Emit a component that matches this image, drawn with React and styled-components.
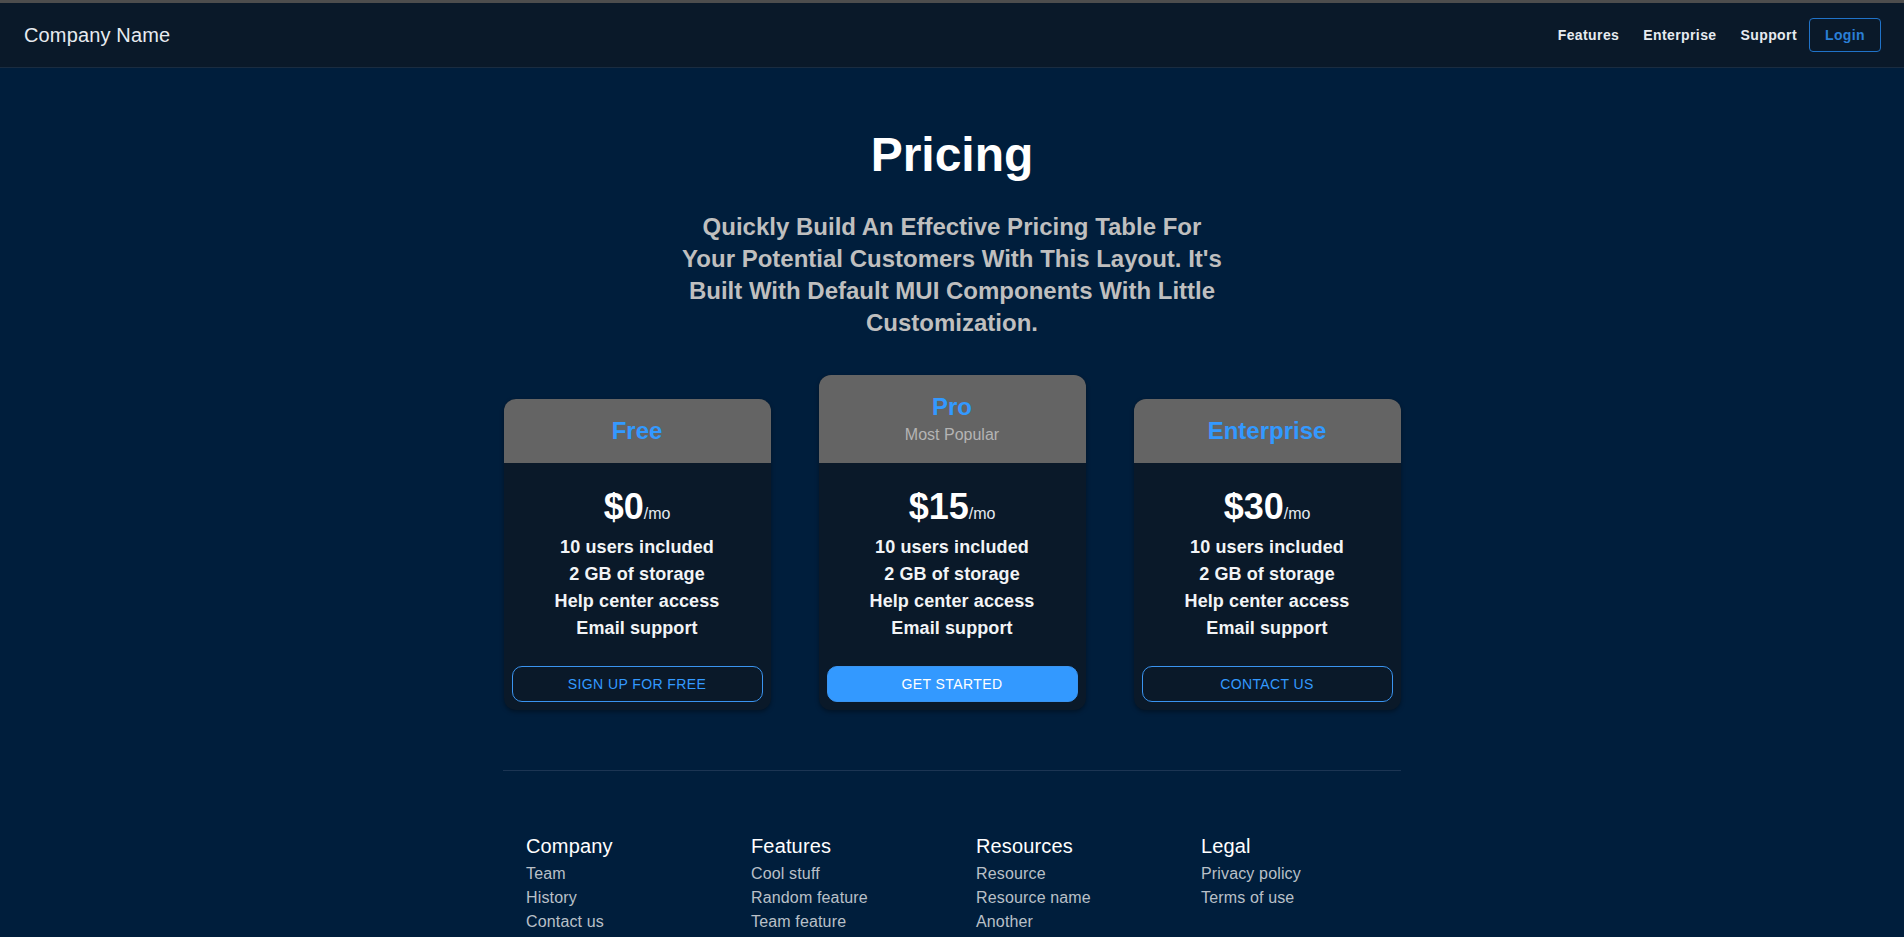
import React from 'react';
import styled, { createGlobalStyle } from 'styled-components';

const GlobalStyle = createGlobalStyle`
	body {
		margin: 0;
		background-color: #001e3c;
		color: #ffffff;
		font-family: 'Liberation Sans', Arial, sans-serif;
	}
`;

const TopBar = styled.header`
	height: 64px;
	display: flex;
	align-items: center;
	padding: 0 23px 0 24px;
	background-color: #0a1929;
	border-top: 3px solid #4d4d4d;
	border-bottom: 1px solid #1a2c40;
`;

const Brand = styled.div`
	flex: 1;
	font-size: 20px;
	letter-spacing: 0.15px;
	color: #e7ebf0;
`;

const NavLink = styled.a`
	margin: 0 12px;
	font-size: 14px;
	font-weight: 700;
	letter-spacing: 0.4px;
	color: #e7ebf0;
	text-decoration: none;
`;

const LoginButton = styled.button`
	width: 72px;
	height: 34px;
	border: 1px solid #2073c8;
	border-radius: 4px;
	background: transparent;
	color: #2a7fd6;
	font-family: inherit;
	font-size: 14px;
	font-weight: 700;
	letter-spacing: 0.4px;
	cursor: pointer;
`;

const Hero = styled.section`
	display: flex;
	flex-direction: column;
	align-items: center;
	padding-top: 59px;
`;

const Title = styled.h1`
	margin: 0;
	font-size: 48px;
	line-height: 56px;
	font-weight: 700;
`;

const Subtitle = styled.h2`
	width: 552px;
	margin: 28px 0 0;
	font-size: 24px;
	line-height: 32px;
	font-weight: 700;
	text-align: center;
	color: #bfbfbf;
`;

const Cards = styled.div`
	display: grid;
	grid-template-columns: repeat(3, 267px);
	gap: 48px;
	align-items: end;
	justify-content: center;
	margin-top: 36px;
`;

const Card = styled.div`
	border-radius: 12px;
	overflow: hidden;
	background-color: #0a1929;
	box-shadow: 0 2px 4px rgba(0, 0, 0, 0.35);
`;

const CardHeader = styled.div`
	padding: 16px;
	background-color: #646464;
	text-align: center;
`;

const PlanName = styled.div`
	font-size: 24px;
	line-height: 32px;
	font-weight: 700;
	color: #3399ff;
`;

const PlanNote = styled.div`
	font-size: 16px;
	line-height: 24px;
	color: #b4b4b4;
`;

const CardBody = styled.div`
	padding: 22px 8px 8px;
	display: flex;
	flex-direction: column;
	align-items: center;
`;

const PriceRow = styled.div`
	display: flex;
	align-items: baseline;
	height: 43px;
	line-height: 43px;
`;

const Amount = styled.span`
	font-size: 36px;
	font-weight: 700;
`;

const Period = styled.span`
	font-size: 16px;
	color: #e7ebf0;
`;

const FeatureList = styled.ul`
	list-style: none;
	margin: 6px 0 24px;
	padding: 0;
	text-align: center;
`;

const Feature = styled.li`
	font-size: 18px;
	line-height: 27px;
	font-weight: 700;
	letter-spacing: 0.1px;
	color: #f2f4f6;
`;

const ActionButton = styled.button`
	width: 100%;
	height: 36px;
	border-radius: 10px;
	border: 1px solid #3a94f0;
	background-color: ${(props) => (props.$filled ? '#3399ff' : 'transparent')};
	color: ${(props) => (props.$filled ? '#ffffff' : '#3399ff')};
	font-family: inherit;
	font-size: 14px;
	letter-spacing: 0.4px;
	text-transform: uppercase;
	cursor: pointer;
`;

const Footer = styled.footer`
	width: 898px;
	margin: 60px auto 0;
	border-top: 1px solid #1c3553;
	padding: 59px 0 40px 23px;
	box-sizing: border-box;
	display: grid;
	grid-template-columns: repeat(4, 225px);
`;

const FooterHeading = styled.h3`
	margin: 0;
	font-size: 20px;
	line-height: 32px;
	font-weight: 400;
	letter-spacing: 0.15px;
	color: #ffffff;
`;

const FooterList = styled.ul`
	list-style: none;
	margin: 0;
	padding: 0;
`;

const FooterLink = styled.li`
	font-size: 16px;
	line-height: 24px;
	letter-spacing: 0.15px;
	color: #b9c0c8;
`;

const tiers = [
	{
		title: 'Free',
		price: '0',
		button: 'Sign up for free',
	},
	{
		title: 'Pro',
		note: 'Most Popular',
		price: '15',
		button: 'Get started',
		filled: true,
	},
	{
		title: 'Enterprise',
		price: '30',
		button: 'Contact us',
	},
];

const features = [
	'10 users included',
	'2 GB of storage',
	'Help center access',
	'Email support',
];

const footers = [
	{ title: 'Company', items: ['Team', 'History', 'Contact us'] },
	{ title: 'Features', items: ['Cool stuff', 'Random feature', 'Team feature'] },
	{ title: 'Resources', items: ['Resource', 'Resource name', 'Another'] },
	{ title: 'Legal', items: ['Privacy policy', 'Terms of use'] },
];

const App = () => {
	return (
		<>
			<GlobalStyle />
			<TopBar>
				<Brand>Company Name</Brand>
				<NavLink href="#">Features</NavLink>
				<NavLink href="#">Enterprise</NavLink>
				<NavLink href="#">Support</NavLink>
				<LoginButton>Login</LoginButton>
			</TopBar>
			<Hero>
				<Title>Pricing</Title>
				<Subtitle>
					Quickly Build An Effective Pricing Table For Your Potential Customers With
					This Layout. It's Built With Default MUI Components With Little
					Customization.
				</Subtitle>
				<Cards>
					{tiers.map((tier) => (
						<Card key={tier.title}>
							<CardHeader>
								<PlanName>{tier.title}</PlanName>
								{tier.note && <PlanNote>{tier.note}</PlanNote>}
							</CardHeader>
							<CardBody>
								<PriceRow>
									<Amount>${tier.price}</Amount>
									<Period>/mo</Period>
								</PriceRow>
								<FeatureList>
									{features.map((f) => (
										<Feature key={f}>{f}</Feature>
									))}
								</FeatureList>
								<ActionButton $filled={tier.filled}>{tier.button}</ActionButton>
							</CardBody>
						</Card>
					))}
				</Cards>
			</Hero>
			<Footer>
				{footers.map((col) => (
					<div key={col.title}>
						<FooterHeading>{col.title}</FooterHeading>
						<FooterList>
							{col.items.map((item) => (
								<FooterLink key={item}>{item}</FooterLink>
							))}
						</FooterList>
					</div>
				))}
			</Footer>
		</>
	);
};

export default App;
